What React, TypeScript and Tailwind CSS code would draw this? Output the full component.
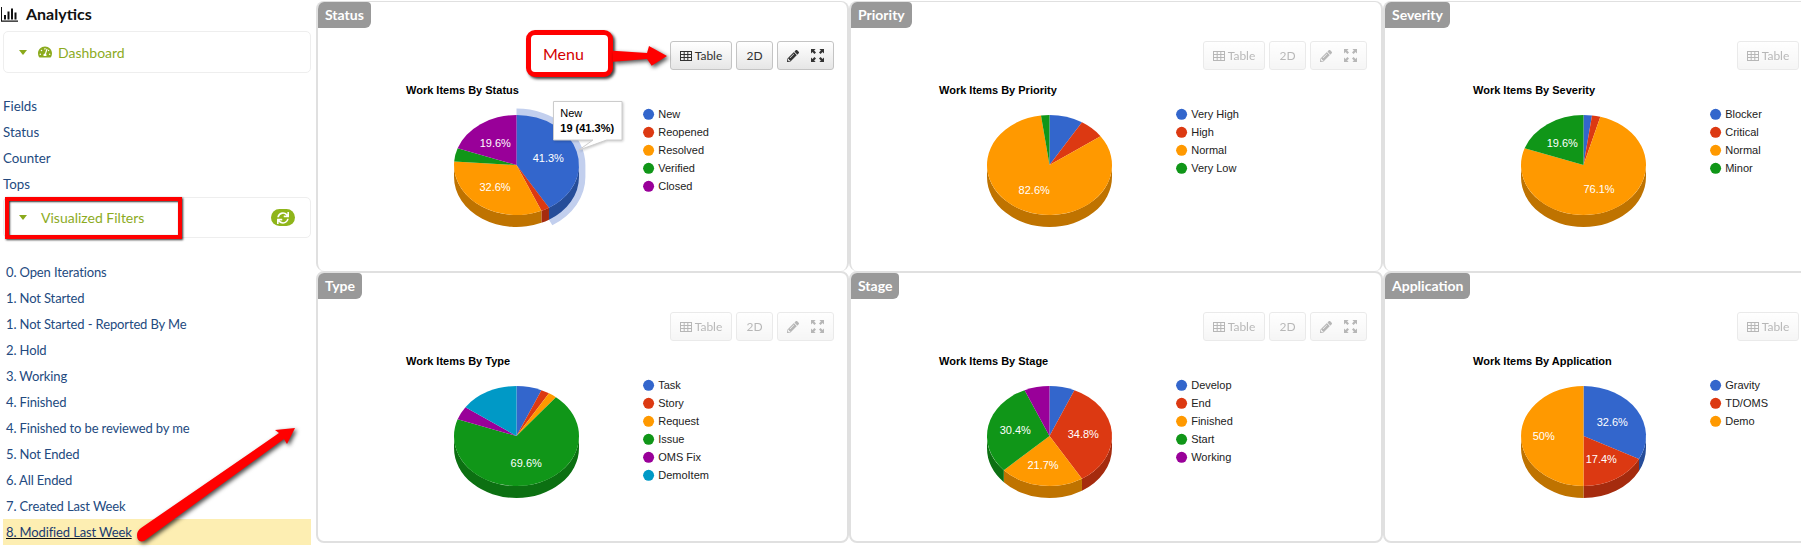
import React from "react";
import { FaPencilAlt, FaSync, FaTachometerAlt } from "react-icons/fa";

const BLUE = "#3366cc", RED = "#dc3912", ORANGE = "#ff9900", GREEN = "#109618", PURPLE = "#990099", CYAN = "#0099c6";
const DARK: Record<string, string> = {
  [BLUE]: "#264d99", [RED]: "#a52b0e", [ORANGE]: "#bf7300", [GREEN]: "#0c7012", [PURPLE]: "#730073", [CYAN]: "#007395",
};

type Slice = { name: string; value: number; color: string };
type Label = { text: string; x: number; y: number };
type Chart = { tab: string; title: string; slices: Slice[]; labels: Label[]; active?: boolean; compact?: boolean };

const charts: Chart[] = [
  {
    tab: "Status", title: "Work Items By Status", active: true,
    slices: [
      { name: "New", value: 19, color: BLUE }, { name: "Reopened", value: 1, color: RED },
      { name: "Resolved", value: 15, color: ORANGE }, { name: "Verified", value: 2, color: GREEN },
      { name: "Closed", value: 9, color: PURPLE },
    ],
    labels: [{ text: "41.3%", x: 230.3, y: 88.3 }, { text: "19.6%", x: 177.3, y: 73.3 }, { text: "32.6%", x: 177, y: 117.3 }],
  },
  {
    tab: "Priority", title: "Work Items By Priority",
    slices: [
      { name: "Very High", value: 4, color: BLUE }, { name: "High", value: 3, color: RED },
      { name: "Normal", value: 38, color: ORANGE }, { name: "Very Low", value: 1, color: GREEN },
    ],
    labels: [{ text: "82.6%", x: 183.2, y: 120 }],
  },
  {
    tab: "Severity", title: "Work Items By Severity", compact: true,
    slices: [
      { name: "Blocker", value: 1, color: BLUE }, { name: "Critical", value: 1, color: RED },
      { name: "Normal", value: 35, color: ORANGE }, { name: "Minor", value: 9, color: GREEN },
    ],
    labels: [{ text: "19.6%", x: 177.3, y: 73.3 }, { text: "76.1%", x: 214, y: 119 }],
  },
  {
    tab: "Type", title: "Work Items By Type",
    slices: [
      { name: "Task", value: 3, color: BLUE }, { name: "Story", value: 1, color: RED },
      { name: "Request", value: 1, color: ORANGE }, { name: "Issue", value: 32, color: GREEN },
      { name: "OMS Fix", value: 2, color: PURPLE }, { name: "DemoItem", value: 7, color: CYAN },
    ],
    labels: [{ text: "69.6%", x: 208.2, y: 122.3 }],
  },
  {
    tab: "Stage", title: "Work Items By Stage",
    slices: [
      { name: "Develop", value: 3, color: BLUE }, { name: "End", value: 16, color: RED },
      { name: "Finished", value: 10, color: ORANGE }, { name: "Start", value: 14, color: GREEN },
      { name: "Working", value: 3, color: PURPLE },
    ],
    labels: [{ text: "30.4%", x: 164.3, y: 89 }, { text: "34.8%", x: 232.3, y: 92.7 }, { text: "21.7%", x: 192, y: 124 }],
  },
  {
    tab: "Application", title: "Work Items By Application", compact: true,
    slices: [
      { name: "Gravity", value: 15, color: BLUE }, { name: "TD/OMS", value: 8, color: RED },
      { name: "Demo", value: 23, color: ORANGE },
    ],
    labels: [{ text: "32.6%", x: 227.3, y: 81 }, { text: "17.4%", x: 216.3, y: 118 }, { text: "50%", x: 158.7, y: 95 }],
  },
];

const CX = 198.5, CY = 95, RX = 62.5, RY = 50, DEPTH = 12;
const ARIAL = "'Liberation Sans', Arial, sans-serif";

function pt(t: number, dy = 0, extra = 0) {
  const x = CX + (RX + extra) * Math.sin(t);
  const y = CY - (RY + extra) * Math.cos(t) + dy;
  return `${x.toFixed(2)} ${y.toFixed(2)}`;
}

function Pie({ chart }: { chart: Chart }) {
  const total = chart.slices.reduce((s, c) => s + c.value, 0);
  let acc = 0;
  const arcs = chart.slices.map((s) => {
    const a = (acc / total) * Math.PI * 2;
    acc += s.value;
    return { ...s, a, b: (acc / total) * Math.PI * 2 };
  });
  const firstEnd = arcs[0].b;
  return (
    <svg width="416" height="190" className="block shrink-0" style={{ fontFamily: ARIAL }}>
      <text x="88" y="24" fontSize="11" fontWeight="700" fill="#000">{chart.title}</text>
      {chart.active && (
        <path
          d={`M ${pt(0, 0, 6.4)} A ${RX + 6.4} ${RY + 6.4} 0 0 1 ${pt(Math.PI / 2, 0, 6.4)} L ${pt(Math.PI / 2, DEPTH, 6.4)} A ${RX + 6.4} ${RY + 6.4} 0 0 1 ${pt(firstEnd, DEPTH, 6.4)} L ${pt(firstEnd, DEPTH)} L ${CX} ${CY} Z`}
          fill="#c2cfee"
        />
      )}
      {arcs.map((s) => {
        const lo = Math.max(s.a, Math.PI / 2), hi = Math.min(s.b, (3 * Math.PI) / 2);
        if (lo >= hi) return null;
        return (
          <path
            key={s.name + "side"}
            d={`M ${pt(lo)} A ${RX} ${RY} 0 0 1 ${pt(hi)} L ${pt(hi, DEPTH)} A ${RX} ${RY} 0 0 0 ${pt(lo, DEPTH)} Z`}
            fill={DARK[s.color]}
          />
        );
      })}
      {arcs.map((s) => (
        <path
          key={s.name}
          d={`M ${CX} ${CY} L ${pt(s.a)} A ${RX} ${RY} 0 ${s.b - s.a > Math.PI ? 1 : 0} 1 ${pt(s.b)} Z`}
          fill={s.color}
        />
      ))}
      {chart.labels.map((l) => (
        <text key={l.text} x={l.x} y={l.y + 4} fontSize="11" fill="#fff" textAnchor="middle">{l.text}</text>
      ))}
      {chart.slices.map((s, i) => (
        <g key={s.name + "legend"}>
          <circle cx="330.6" cy={44.3 + i * 18} r="5.5" fill={s.color} />
          <text x="340.2" y={48.2 + i * 18} fontSize="11" fill="#222">{s.name}</text>
        </g>
      ))}
      {chart.active && (
        <g>
          <path
            d="M235.5 31.5 H304 V70 H288.7 L261 80 L275 70 H235.5 Z"
            fill="#fff"
            stroke="#ccc"
            className="drop-shadow-[1px_1px_1px_rgba(0,0,0,0.2)]"
          />
          <text x="242.3" y="46.5" fontSize="11" fill="#000">New</text>
          <text x="242.3" y="61.5" fontSize="11" fontWeight="700" fill="#000">19 (41.3%)</text>
        </g>
      )}
    </svg>
  );
}

function TableIcon() {
  return (
    <svg width="12" height="10" viewBox="0 0 12 10" fill="none" stroke="currentColor" strokeWidth="1" className="shrink-0">
      <rect x="0.5" y="0.5" width="11" height="9" />
      <path d="M0.5 3.5H11.5M0.5 6.5H11.5M4.2 0.5V9.5M7.8 0.5V9.5" />
    </svg>
  );
}

function ExpandIcon() {
  return (
    <svg width="13" height="13" viewBox="0 0 13 13" fill="currentColor" className="shrink-0">
      <path d="M0 0H4.6L3.1 1.5L5 3.4L3.4 5L1.5 3.1L0 4.6Z" />
      <path d="M13 0H8.4L9.9 1.5L8 3.4L9.6 5L11.5 3.1L13 4.6Z" />
      <path d="M0 13H4.6L3.1 11.5L5 9.6L3.4 8L1.5 9.9L0 8.4Z" />
      <path d="M13 13H8.4L9.9 11.5L8 9.6L9.6 8L11.5 9.9L13 8.4Z" />
    </svg>
  );
}

const btn =
  "h-[29px] flex items-center justify-center shrink-0 rounded-[3px] border border-[#c4c4c4] bg-gradient-to-b from-[#ffffff] to-[#e6e6e6] text-[12px] text-[#333] [font-family:Lato,sans-serif]";

function Panel({ chart, className }: { chart: Chart; className: string }) {
  return (
    <section className={`relative min-w-0 overflow-hidden rounded-lg border-2 border-[#e0e0e0] bg-white ${className}`}>
      <div className="h-[26px] w-fit px-[7px] rounded-br-md rounded-tr-sm bg-[#999999] text-[14px] font-bold leading-[26px] text-white [font-family:Lato,sans-serif]">
        {chart.tab}
      </div>
      <div className={`ml-[352px] mt-[13px] flex h-[29px] gap-1 ${chart.active ? "" : "opacity-35"}`}>
        <div className={`${btn} w-[62px] gap-[3px]`}><TableIcon />Table</div>
        {!chart.compact && <div className={`${btn} w-[37px]`}>2D</div>}
        {!chart.compact && (
          <div className={`${btn} w-[57px] gap-[12px]`}>
            <FaPencilAlt size={12} />
            <ExpandIcon />
          </div>
        )}
      </div>
      <Pie chart={chart} />
    </section>
  );
}

const links = ["Fields", "Status", "Counter", "Tops"];
const filters = [
  "0. Open Iterations", "1. Not Started", "1. Not Started - Reported By Me", "2. Hold", "3. Working", "4. Finished",
  "4. Finished to be reviewed by me", "5. Not Ended", "6. All Ended", "7. Created Last Week",
];

function Caret() {
  return <span className="block h-0 w-0 shrink-0 border-x-[4px] border-t-[5px] border-x-transparent border-t-[#8aa91b]" />;
}

function Sidebar() {
  return (
    <aside className="w-[316px] shrink-0 pl-[3px] pr-[5px] text-[14px] text-[#234a80]">
      <div className="-ml-[2px] flex h-[28px] items-center gap-[8px] text-[16px] font-bold text-[#111]">
        <svg width="17" height="15" viewBox="0 0 17 15" fill="#111" className="shrink-0">
          <path d="M0 0H1V13.6H17V14.8H0Z" />
          <path d="M3 8H5V12.6H3ZM6.5 4.5H8.5V12.6H6.5ZM10 1.5H12V12.6H10ZM13.5 5.5H15.5V12.6H13.5Z" />
        </svg>
        Analytics
      </div>
      <div className="mt-[3px] flex h-[42px] items-center rounded-[5px] border border-[#eeeeee] pl-[15px] text-[#8cab1e]">
        <Caret />
        <FaTachometerAlt size={14} className="ml-[11px] shrink-0" />
        <span className="ml-[6px]">Dashboard</span>
      </div>
      <ul className="mt-[20px] text-[13.3px]">
        {links.map((l) => <li key={l} className="h-[26px] leading-[26px]">{l}</li>)}
      </ul>
      <div className="flex h-[41px] items-center rounded-[5px] border border-[#eeeeee] pl-[15px] pr-[15px] text-[#8cab1e]">
        <Caret />
        <span className="ml-[14px]">Visualized Filters</span>
        <span className="ml-auto flex h-[17px] w-[24px] items-center justify-center rounded-full bg-[#8fb51a] text-white">
          <FaSync size={12} />
        </span>
      </div>
      <ul className="mt-[21px] text-[13px] tracking-[-0.01em]">
        {filters.map((f) => <li key={f} className="h-[26px] pl-[3px] leading-[26px]">{f}</li>)}
        <li className="h-[26px] bg-[#fdeeb2] pl-[3px] leading-[26px] text-[#1a3a70]">
          <span className="underline decoration-[#111]">8. Modified Last Week</span>
        </li>
      </ul>
    </aside>
  );
}

export default function App() {
  return (
    <div className="relative flex h-[550px] w-[1801px] overflow-hidden bg-white [font-family:Lato,sans-serif]">
      <Sidebar />
      <main className="grid h-[543px] w-[1497px] shrink-0 grid-cols-[533px_534px_430px] grid-rows-[271px_272px]">
        {charts.map((c, i) => (
          <Panel key={c.tab} chart={c} className={i < 3 ? "mt-px border-t border-b-0" : ""} />
        ))}
      </main>

      {/* Annotations over the screenshot */}
      <div className="absolute left-[5px] top-[197px] h-[42px] w-[177px] border-[4px] border-[#ff0000] shadow-[1px_1px_2px_rgba(0,0,0,0.8),inset_1px_1px_2px_rgba(0,0,0,0.8)]" />
      <div className="absolute left-[526px] top-[30px] flex h-[47px] w-[87px] items-center rounded-[9px] border-[5px] border-[#ff0000] bg-white pl-[12px] text-[16px] text-[#d40000] shadow-[2px_2px_3px_rgba(0,0,0,0.75)]">
        Menu
      </div>
      <svg width="1801" height="550" className="pointer-events-none absolute left-0 top-0 drop-shadow-[2px_2px_2px_rgba(0,0,0,0.7)]">
        <path d="M613 50.7 L647 53 L649 46 L667 56 L651.7 65.7 L647 59 L613 61.7 Z" fill="#ff0000" />
        <path d="M141 528 L279 433 L275 430 L295 428 L287 444 L284 439 L144 541 Q137 543 137 535 Q137 531 141 528 Z" fill="#ff0000" />
      </svg>
    </div>
  );
}
